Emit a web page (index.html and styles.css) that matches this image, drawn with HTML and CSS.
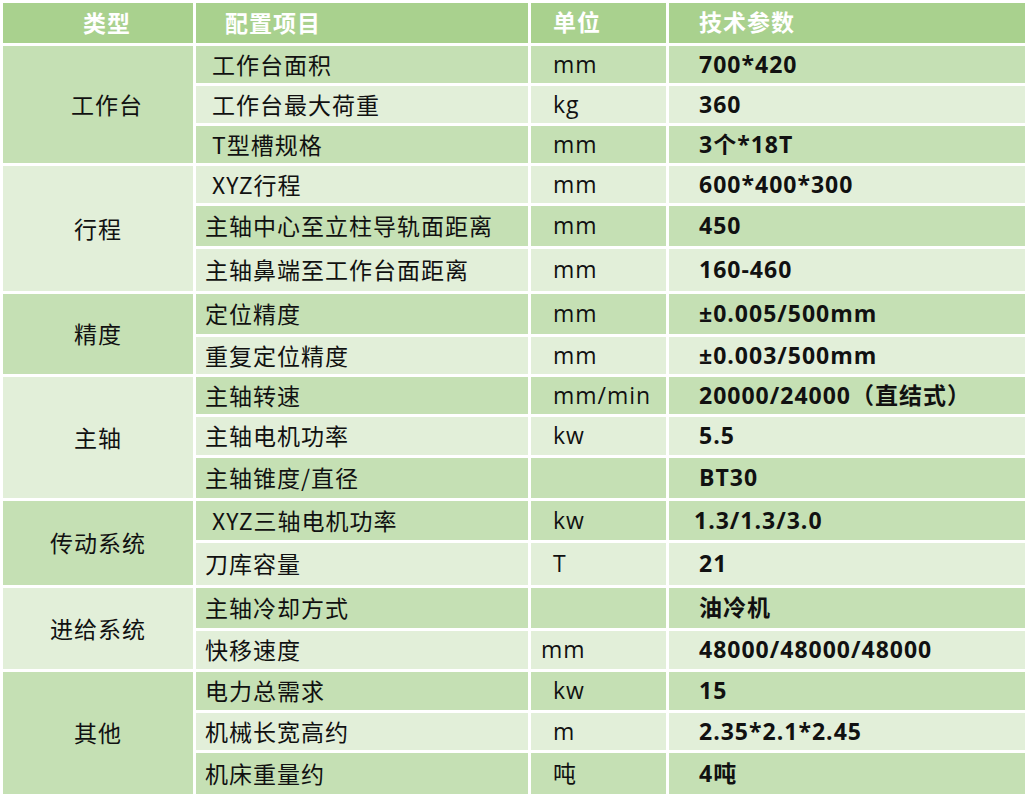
FILE: index.html
```html
<!DOCTYPE html>
<html lang="zh-CN">
<head>
<meta charset="utf-8">
<title>技术参数</title>
<link rel="stylesheet" href="styles.css">
</head>
<body>
<table class="spec">
  <colgroup>
    <col class="c1"><col class="c2"><col class="c3"><col class="c4">
  </colgroup>
  <thead>
    <tr class="hd">
      <th class="cat shift">类型</th>
      <th class="item hitem">配置项目</th>
      <th class="unit">单位</th>
      <th class="val">技术参数</th>
    </tr>
  </thead>
  <tbody>
    <tr class="h37 mid">
      <td class="cat mid shift" rowspan="3">工作台</td>
      <td class="item in">工作台面积</td><td class="unit">mm</td><td class="val">700*420</td>
    </tr>
    <tr class="h37 light">
      <td class="item in">工作台最大荷重</td><td class="unit">kg</td><td class="val">360</td>
    </tr>
    <tr class="h37 mid">
      <td class="item in">T型槽规格</td><td class="unit">mm</td><td class="val">3个*18T</td>
    </tr>

    <tr class="h37 light">
      <td class="cat light" rowspan="3">行程</td>
      <td class="item in">XYZ行程</td><td class="unit">mm</td><td class="val">600*400*300</td>
    </tr>
    <tr class="h40 mid">
      <td class="item">主轴中心至立柱导轨面距离</td><td class="unit">mm</td><td class="val">450</td>
    </tr>
    <tr class="h42 light">
      <td class="item">主轴鼻端至工作台面距离</td><td class="unit">mm</td><td class="val">160-460</td>
    </tr>

    <tr class="h40 mid">
      <td class="cat mid" rowspan="2">精度</td>
      <td class="item">定位精度</td><td class="unit">mm</td><td class="val">±0.005/500mm</td>
    </tr>
    <tr class="h37 light">
      <td class="item">重复定位精度</td><td class="unit">mm</td><td class="val">±0.003/500mm</td>
    </tr>

    <tr class="h37 mid">
      <td class="cat light" rowspan="3">主轴</td>
      <td class="item">主轴转速</td><td class="unit">mm/min</td><td class="val">20000/24000（直结式）</td>
    </tr>
    <tr class="h38 light">
      <td class="item">主轴电机功率</td><td class="unit">kw</td><td class="val">5.5</td>
    </tr>
    <tr class="h40 mid">
      <td class="item">主轴锥度/直径</td><td class="unit"></td><td class="val">BT30</td>
    </tr>

    <tr class="h39 mid">
      <td class="cat mid" rowspan="2">传动系统</td>
      <td class="item in">XYZ三轴电机功率</td><td class="unit">kw</td><td class="val out">1.3/1.3/3.0</td>
    </tr>
    <tr class="h42 light">
      <td class="item">刀库容量</td><td class="unit">T</td><td class="val">21</td>
    </tr>

    <tr class="h40 mid">
      <td class="cat light" rowspan="2">进给系统</td>
      <td class="item">主轴冷却方式</td><td class="unit"></td><td class="val">油冷机</td>
    </tr>
    <tr class="h38 light">
      <td class="item">快移速度</td><td class="unit left">mm</td><td class="val">48000/48000/48000</td>
    </tr>

    <tr class="h38 mid">
      <td class="cat mid" rowspan="3">其他</td>
      <td class="item">电力总需求</td><td class="unit">kw</td><td class="val">15</td>
    </tr>
    <tr class="h37 light">
      <td class="item">机械长宽高约</td><td class="unit">m</td><td class="val">2.35*2.1*2.45</td>
    </tr>
    <tr class="h41 mid">
      <td class="item">机床重量约</td><td class="unit">吨</td><td class="val">4吨</td>
    </tr>
  </tbody>
</table>
</body>
</html>
```

FILE: styles.css
```css
html, body {
  margin: 0;
  padding: 0;
  background: #ffffff;
}

.spec {
  border-collapse: separate;
  border-spacing: 3px;
  table-layout: fixed;
  width: 1028px;
  font-family: "Open Sans", "Noto Sans CJK SC", sans-serif;
  font-size: 23px;
  letter-spacing: 1px;
  color: #111111;
  line-height: 1.2;
}

.c1 { width: 190px; }
.c2 { width: 332px; }
.c3 { width: 135px; }
.c4 { width: 356px; }

.spec th,
.spec td {
  padding: 0;
  vertical-align: middle;
  text-align: left;
  white-space: nowrap;
}

.hd th {
  height: 40px;
  background: #a9d18e;
  color: #ffffff;
  font-weight: 700;
}

.h37 td { height: 37px; }
.h38 td { height: 38px; }
.h39 td { height: 39px; }
.h40 td { height: 40px; }
.h41 td { height: 41px; }
.h42 td { height: 42px; }

.mid td { background: #c5e0b4; }
.light td { background: #e2efd9; }
.spec td.cat.mid { background: #c5e0b4; }
.spec td.cat.light { background: #e2efd9; }

.spec .cat {
  text-align: center;
  font-family: "Noto Sans CJK SC", sans-serif;
}
.spec .cat.shift { padding-left: 18px; }

.spec .item {
  padding-left: 9px;
  font-family: "Noto Sans CJK SC", sans-serif;
}
.spec .item.in { padding-left: 16px; }
.spec .hitem { padding-left: 29px; }

.spec .unit { padding-left: 22px; }
.spec .unit.left { padding-left: 10px; }

.spec .val {
  padding-left: 30px;
  font-weight: 700;
}
.spec .val.out { padding-left: 25px; }
```
